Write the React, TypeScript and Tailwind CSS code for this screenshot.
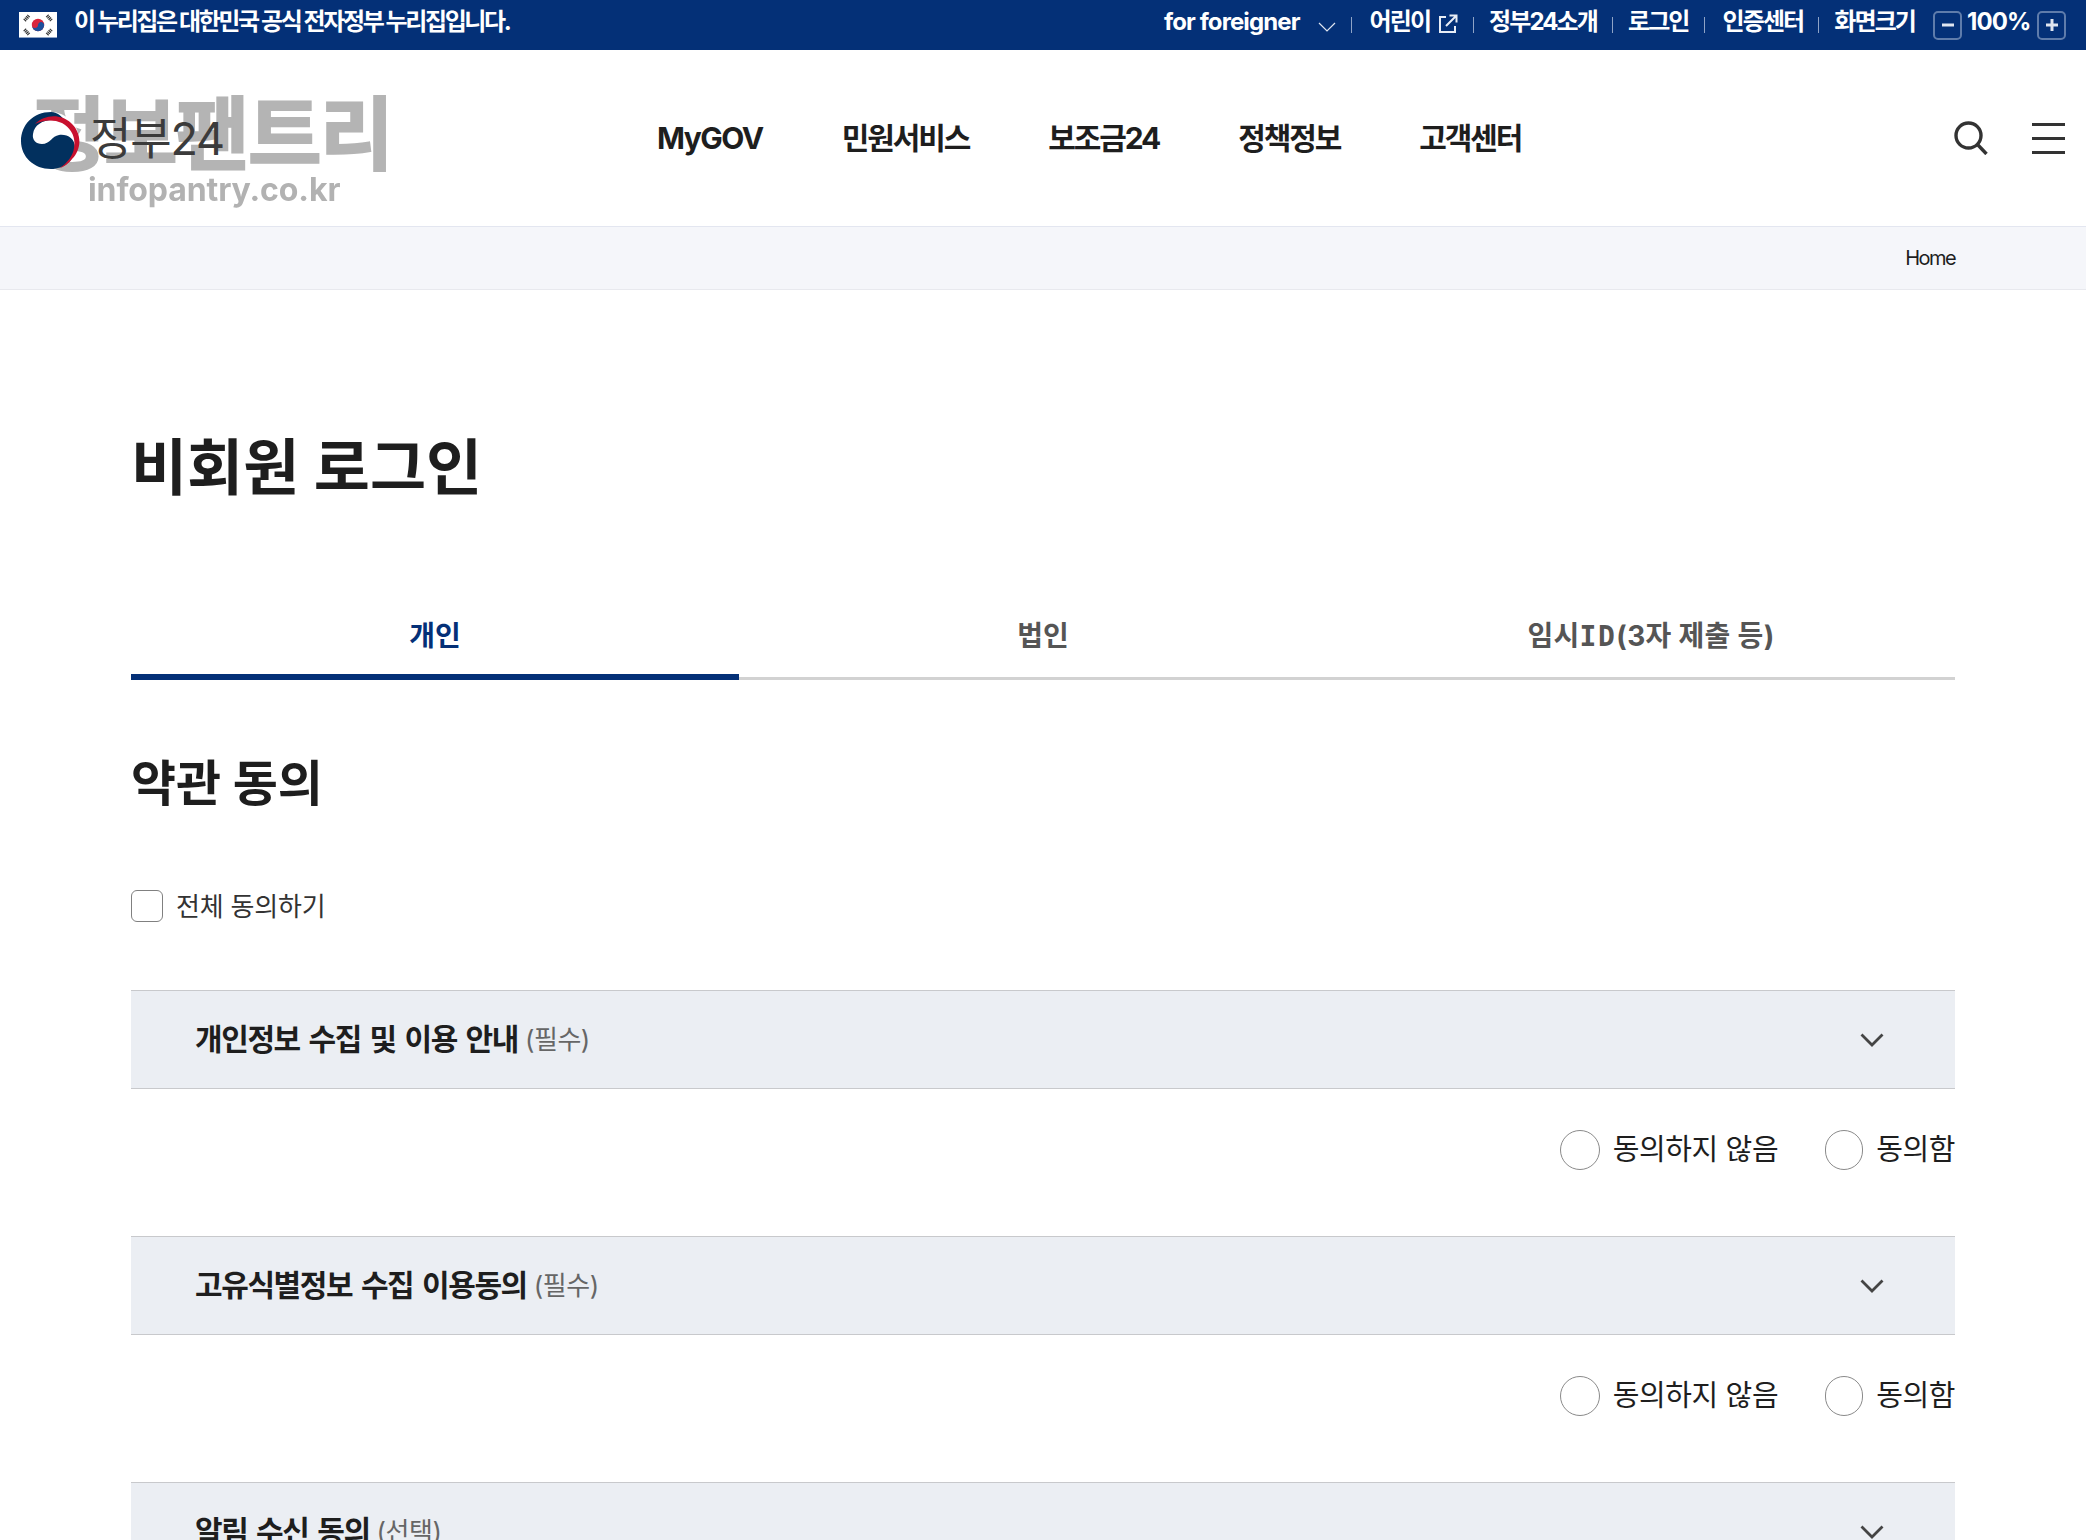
import { Fragment } from 'react';

const FONT = "font-['Inter','Noto_Sans_CJK_KR',sans-serif]";

const topLinks = ['어린이', '정부24소개', '로그인', '인증센터'];
const navItems = ['MyGOV', '민원서비스', '보조금24', '정책정보', '고객센터'];
const terms = [
	{ title: '개인정보 수집 및 이용 안내', tag: '(필수)', radios: true },
	{ title: '고유식별정보 수집 이용동의', tag: '(필수)', radios: true },
	{ title: '알림 수신 동의', tag: '(선택)', radios: false },
];

function Flag() {
	return (
		<svg width="38" height="26" viewBox="0 0 38 26" className="shrink-0">
			<rect width="38" height="26" fill="#fff" />
			<rect y="25" width="38" height="1" fill="#8fa3c4" />
			<circle cx="19" cy="13" r="6.2" fill="#d8243c" />
			<path d="M12.8 13a6.2 6.2 0 0 0 12.4 0c0-1.7-1.4-3.1-3.1-3.1S19 11.300 19 13s-1.400 3.100-3.100 3.100S12.800 14.700 12.800 13z" fill="#1d4f9c" />
			<g stroke="#333" strokeWidth="3.400" strokeDasharray="1.200 0.600">
				<path d="M5.500 8.500 10 3.500" />
				<path d="M28 3.500 32.500 8.500" />
				<path d="M5.500 17.500 10 22.500" />
				<path d="M28 22.500 32.500 17.500" />
			</g>
		</svg>
	);
}

function ExternalIcon() {
	return (
		<svg width="20" height="20" viewBox="0 0 20 20" fill="none" stroke="#e8edf6" strokeWidth="2" className="shrink-0">
			<path d="M8 3H2v15h15v-6" />
			<path d="M8 12 18 2M11.500 1.500h7v7" />
		</svg>
	);
}

function SizeButton({ plus }: { plus?: boolean }) {
	return (
		<span className="flex h-[29px] w-[29px] items-center justify-center rounded-[5px] border-2 border-[#5f7cab]">
			<svg width="14" height="14" viewBox="0 0 14 14" stroke="#dfe5f0" strokeWidth="3">
				<path d="M1 7h12" />
				{plus && <path d="M7 1v12" />}
			</svg>
		</span>
	);
}

function TopBar() {
	return (
		<div className="flex h-[50px] items-center justify-between bg-[#043077] pl-[19px] pr-[20px] text-white">
			<div className="flex items-center gap-[17px]">
				<Flag />
				<span className="mt-[-7px] text-[24px] font-bold leading-none tracking-[-2.400px]">
					이 누리집은 대한민국 공식 전자정부 누리집입니다.
				</span>
			</div>
			<div className="flex items-center text-[24px] font-bold leading-none tracking-[-1.900px]">
				<span className="mt-[-6px] tracking-[-0.900px]">for foreigner</span>
				<svg width="18" height="10" viewBox="0 0 18 10" fill="none" stroke="#dfe5f0" strokeWidth="1.200" className="ml-[18px] mt-[3px]">
					<path d="M1 1l8 8 8-8" />
				</svg>
				{topLinks.map((link, i) => (
					<Fragment key={link}>
						<span className="mx-[15px] h-[16px] w-px bg-[#8ea3c6]" />
						<span className={i === 0 || i === 3 ? 'ml-[3px] mt-[-6px]' : 'mt-[-6px]'}>{link}</span>
						{i === 0 && (
							<span className="ml-[8px] mt-[-3px]">
								<ExternalIcon />
							</span>
						)}
					</Fragment>
				))}
				<span className="mx-[15px] h-[16px] w-px bg-[#8ea3c6]" />
				<span className="mt-[-6px]">화면크기</span>
				<span className="ml-[18px]">
					<SizeButton />
				</span>
				<span className="ml-[5px] mt-[-6px] w-[64px] tracking-[-0.900px]">100%</span>
				<span className="ml-[6px]">
					<SizeButton plus />
				</span>
			</div>
		</div>
	);
}

function Logo() {
	return (
		<div className="relative flex h-full w-[657px] shrink-0 items-center pl-[21px]">
			{/* watermark that sits on the captured page */}
			<div className="absolute left-[32px] top-[42px] flex flex-col items-start">
				<span className="text-[80px] font-bold leading-[84px] tracking-[-1.600px] text-[#b4b4b4] blur-[0.5px] [-webkit-text-stroke:2px_#b4b4b4]">정보팬트리</span>
				<span className="ml-[56px] mt-[-6px] text-[32px] font-bold leading-[40px] tracking-[-0.100px] text-[#b2b2b2] blur-[0.5px]">infopantry.co.kr</span>
			</div>
			<svg width="60" height="58" viewBox="0 0 60 58" className="relative mt-[3px] shrink-0">
				<circle cx="30" cy="29" r="28" fill="#fff" />
				<path d="M30 1C12 1 0 14 0 30c0 16 13 28 30 28 13 0 24-9 24-21 0-10-8-14-16-13-7 1-9 9-17 9-6 0-10-4-9-10C13 14 22 9 31 9c6 0 11 2 15 5C42 6 37 1 30 1z" fill="#02305e" />
				<path d="M14 13C23 4 39 2 50 12c11 10 11 26 1 36-3 4-8 8-12 9 7-5 13-12 14-20 2-11-3-20-12-25-9-4-19-3-27 1z" fill="#c8102e" />
			</svg>
			<span className="relative ml-[9px] text-[45px] leading-none tracking-[-1.200px] text-[#3b3b3b]">정부24</span>
		</div>
	);
}

function Header() {
	return (
		<header className="flex h-[177px] items-center border-b border-[#e3e6f0] pr-[21px]">
			<Logo />
			<nav className="flex items-center gap-[79px] text-[30px] font-bold leading-none tracking-[-2.100px] text-[#1e1e1e]">
				{navItems.map((item) => (
					<span key={item} className={item === 'MyGOV' ? 'tracking-[-1.500px]' : ''}>
						{item}
					</span>
				))}
			</nav>
			<div className="ml-auto flex items-center gap-[44px]">
				<svg width="34" height="34" viewBox="0 0 34 34" fill="none" stroke="#333" strokeWidth="3.400">
					<circle cx="14.500" cy="14.500" r="12.500" />
					<path d="M23.500 23.500 32.500 33" />
				</svg>
				<div className="flex w-[33px] flex-col gap-[11px]">
					<span className="h-[3px] bg-[#333]" />
					<span className="h-[3px] bg-[#333]" />
					<span className="h-[3px] bg-[#333]" />
				</div>
			</div>
		</header>
	);
}

function Radio({ label, small }: { label: string; small?: boolean }) {
	return (
		<label className="flex items-center gap-[13px]">
			<span className={`block h-[40px] rounded-full border border-[#8a8a8a] bg-white ${small ? 'w-[38px]' : 'w-[40px]'}`} />
			<span>{label}</span>
		</label>
	);
}

function Term({ title, tag, radios }: { title: string; tag: string; radios: boolean }) {
	return (
		<div>
			<div className="flex h-[99px] items-center justify-between border-y border-[#c8c9cc] bg-[#ebeef3] pl-[64px] pr-[71px]">
				<div className="flex items-center gap-[7px]">
					<span className="text-[30px] font-bold tracking-[-1.400px] text-[#1e1e1e] [word-spacing:3px]">{title}</span>
					<span className="text-[26px] tracking-[-0.500px] text-[#666]">{tag}</span>
				</div>
				<svg width="24" height="14" viewBox="0 0 24 14" fill="none" stroke="#444" strokeWidth="2.800">
					<path d="M1.500 1.500 12 12 22.500 1.500" />
				</svg>
			</div>
			{radios && (
				<div className="flex h-[147px] items-start justify-end gap-[47px] pt-[41px] text-[29px] leading-[40px] tracking-[-0.400px] text-[#1e1e1e]">
					<Radio label="동의하지 않음" />
					<Radio label="동의함" small />
				</div>
			)}
		</div>
	);
}

function Tab({ active, children }: { active?: boolean; children: React.ReactNode }) {
	return (
		<div
			className={
				active
					? 'flex h-[90px] flex-1 items-start justify-center border-b-[6px] border-[#043077] pt-[26px] text-[28px] font-bold leading-[40px] text-[#043077]'
					: 'flex h-[90px] flex-1 items-start justify-center border-b-[3px] border-[#d2d2d2] pt-[26px] text-[28px] font-bold leading-[40px] text-[#555]'
			}
		>
			<span>{children}</span>
		</div>
	);
}

export default function App() {
	return (
		<div className={`h-[1540px] overflow-hidden bg-white ${FONT}`}>
			<TopBar />
			<Header />
			<div className="flex h-[63px] items-center justify-end border-b border-[#e8e9ee] bg-[#f5f6fa] pr-[131px] text-[20px] tracking-[-1.600px] text-[#1e1e1e]">
				Home
			</div>
			<main className="mx-auto w-[1824px]">
				<h1 className="mt-[138px] text-[61px] font-bold leading-[80px] text-[#1e1e1e]">비회원 로그인</h1>
				<div className="mt-[82px] flex">
					<Tab active>개인</Tab>
					<Tab>법인</Tab>
					<Tab>
						<span className="tracking-[0.300px]">
							임시<span className="font-['DejaVu_Sans_Mono',monospace] tracking-[1.500px]">ID</span>(3자 제출 등)
						</span>
					</Tab>
				</div>
				<h2 className="mt-[74px] text-[49px] font-bold leading-[60px] text-[#1e1e1e]">약관 동의</h2>
				<label className="mt-[76px] flex h-[32px] items-center gap-[13px] text-[26px] tracking-[-0.200px] text-[#333]">
					<span className="block h-[32px] w-[32px] rounded-[6px] border border-[#808080] bg-white" />
					전체 동의하기
				</label>
				<div className="mt-[68px]">
					{terms.map((term) => (
						<Term key={term.title} {...term} />
					))}
				</div>
			</main>
		</div>
	);
}
